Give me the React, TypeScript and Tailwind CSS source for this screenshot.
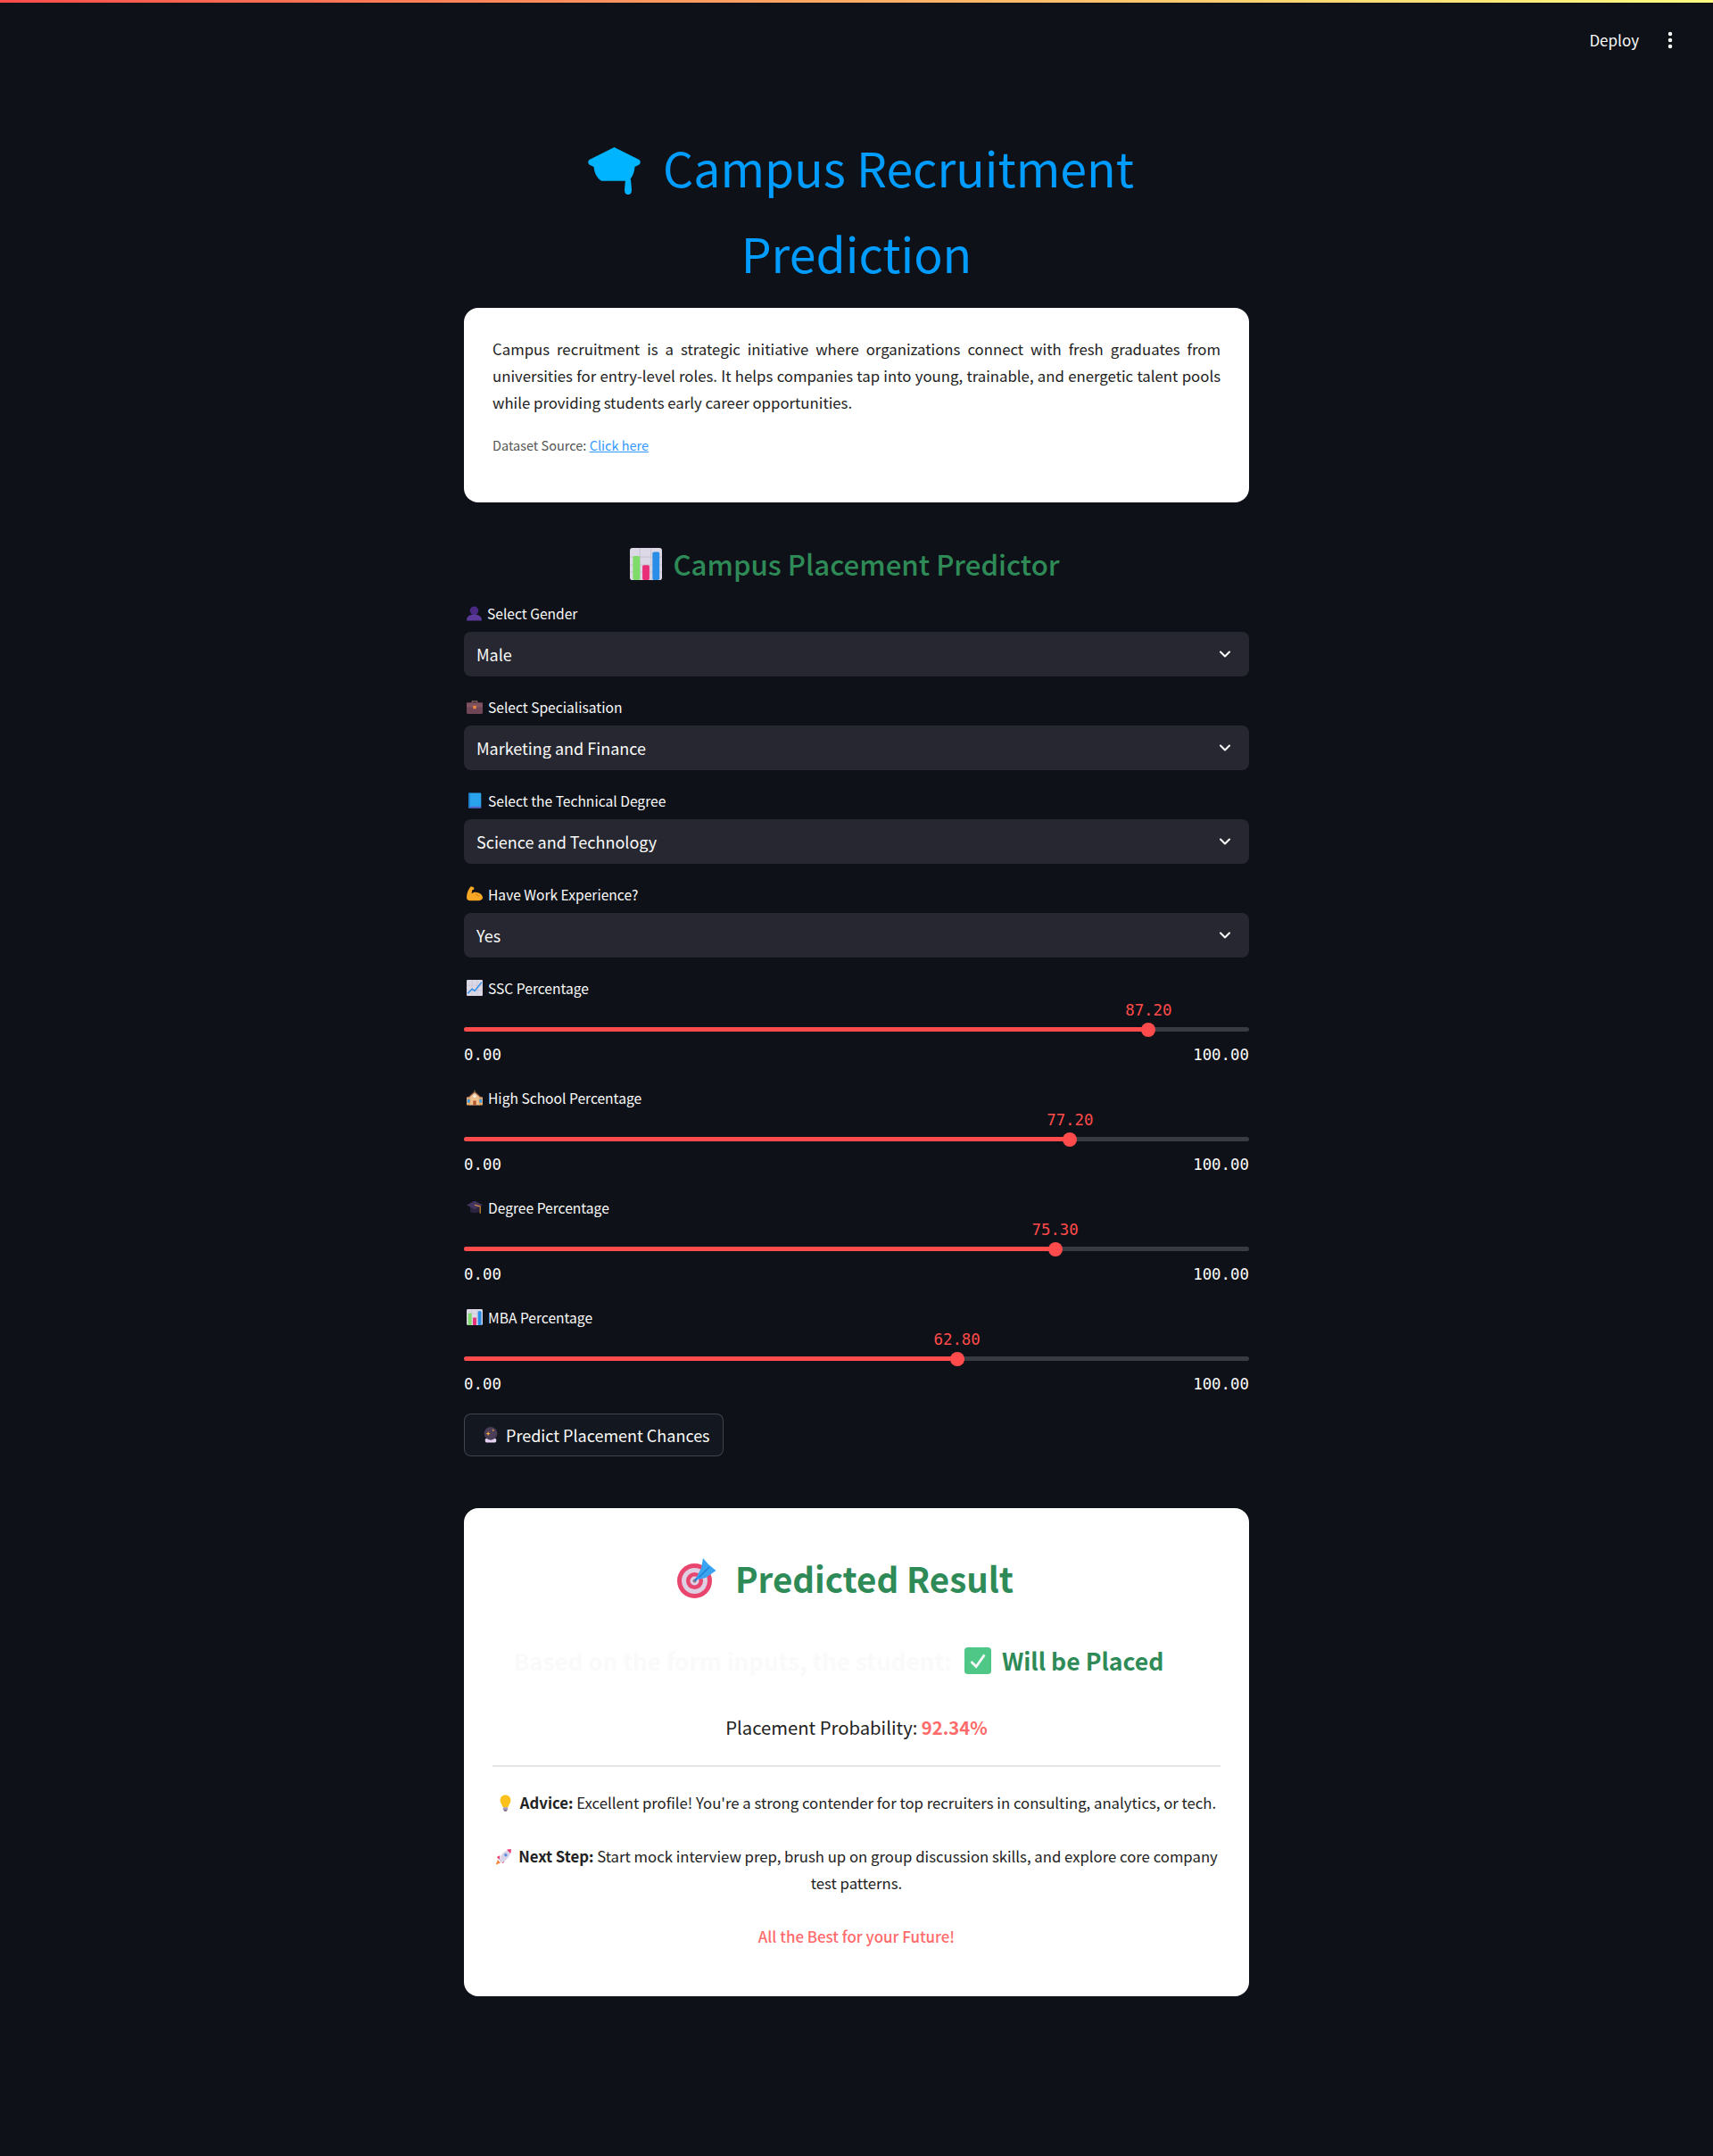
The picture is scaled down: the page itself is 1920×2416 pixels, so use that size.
import { ChevronDown, EllipsisVertical } from "lucide-react";
import type { ReactNode } from "react";

const Bust = ({ className = "" }: { className?: string }) => (
  <svg viewBox="0 0 32 32" className={className}>
    <circle cx="16" cy="10" r="9" fill="#4b2a86" />
    <path d="M0 31c0-9 7-13 16-13s16 4 16 13z" fill="#5b3a9c" />
  </svg>
);

const Briefcase = ({ className = "" }: { className?: string }) => (
  <svg viewBox="0 0 32 32" className={className}>
    <path d="M11 8V5h10v3" fill="none" stroke="#8a6a6a" strokeWidth="2" />
    <rect x="0" y="8" width="32" height="22" rx="2" fill="#6e4656" />
    <rect x="0" y="8" width="32" height="9" fill="#80525f" />
    <rect x="13" y="14" width="6" height="6" fill="#f08a3c" />
  </svg>
);

const BlueBook = ({ className = "" }: { className?: string }) => (
  <svg viewBox="0 0 32 32" className={className}>
    <rect x="4" y="1" width="25" height="30" rx="2" fill="#29a3ec" />
    <rect x="4" y="28" width="25" height="3" fill="#5d5fd0" />
    <rect x="4" y="1" width="3" height="30" fill="#1c7fd0" />
  </svg>
);

const Muscle = ({ className = "" }: { className?: string }) => (
  <svg viewBox="0 0 32 32" className={className}>
    <path d="M8 1c4-1 7 1 7 4 0 2-2 3-4 3l-1 7c3-3 8-4 12-2 5 1 10 5 10 10 0 4-5 6-12 6H7c-4 0-7-3-7-6C0 15 3 7 8 1z" fill="#f9a825" />
    <path d="M17 16c3 0 6 2 7 5" fill="none" stroke="#e07f12" strokeWidth="2" />
  </svg>
);

const ChartUp = ({ className = "" }: { className?: string }) => (
  <svg viewBox="0 0 32 32" className={className}>
    <rect x="0" y="0" width="32" height="32" rx="2" fill="#dcd8e6" />
    <path d="M0 11h32M0 21h32M11 0v32M21 0v32" stroke="#c4bfd2" strokeWidth="1" />
    <path d="M2 27l9-9 5 4 14-17" fill="none" stroke="#2f8fe8" strokeWidth="2.6" />
  </svg>
);

const BarChart = ({ className = "" }: { className?: string }) => (
  <svg viewBox="0 0 32 32" className={className}>
    <rect x="0" y="0" width="32" height="32" rx="2.5" fill="#dcd8e6" />
    <path d="M0 9h32M0 17h32M0 24h32M10 0v32M21 0v32" stroke="#c4bfd2" strokeWidth="0.8" />
    <rect x="3" y="8" width="7" height="24" rx="1.5" fill="#7fdc6a" />
    <rect x="12.5" y="17" width="7" height="15" rx="1.5" fill="#e92f78" />
    <rect x="22.5" y="4" width="7" height="28" rx="1.5" fill="#2a8ee8" />
  </svg>
);

const School = ({ className = "" }: { className?: string }) => (
  <svg viewBox="0 0 32 32" className={className}>
    <path d="M16 1v5" stroke="#4caf50" strokeWidth="1.5" />
    <path d="M6 14l10-9 10 9v17H6z" fill="#eec08f" />
    <path d="M4 15L16 4l12 11" fill="none" stroke="#7a4a3c" strokeWidth="2" />
    <rect x="0" y="15" width="8" height="16" fill="#e8a96e" />
    <rect x="24" y="15" width="8" height="16" fill="#e8a96e" />
    <rect x="1.5" y="19" width="5" height="7" fill="#3a9be0" />
    <rect x="25.5" y="19" width="5" height="7" fill="#3a9be0" />
    <rect x="13" y="22" width="6" height="9" fill="#b5562e" />
    <circle cx="16" cy="13" r="3" fill="#f5f0ea" />
  </svg>
);

const GradCap = ({ className = "" }: { className?: string }) => (
  <svg viewBox="0 0 32 32" className={className}>
    <path d="M7 14v10c3 4 15 4 18 0V14z" fill="#2c2440" />
    <path d="M0 11L16 3l16 8-16 9z" fill="#43355f" />
    <path d="M16 11l11 3v14" fill="none" stroke="#e89b3c" strokeWidth="2" />
  </svg>
);

const CrystalBall = ({ className = "" }: { className?: string }) => (
  <svg viewBox="0 0 32 32" className={className}>
    <rect x="5" y="23" width="22" height="8" rx="2.5" fill="#e3d0f0" />
    <circle cx="16" cy="13" r="13" fill="#4a3d58" />
    <path d="M11 9l1.3 3.2L15.5 13.5l-3.2 1.3L11 18l-1.3-3.2L6.5 13.5l3.2-1.3z" fill="#f4a63c" />
    <path d="M21 4l.8 2 2 .8-2 .8-.8 2-.8-2-2-.8 2-.8z" fill="#f4a63c" />
  </svg>
);

const Target = ({ className = "" }: { className?: string }) => (
  <svg viewBox="0 0 45 45" className={className}>
    <circle cx="19.5" cy="25.5" r="19.5" fill="#e8466f" />
    <circle cx="19.5" cy="25.5" r="14.5" fill="#dfcfe2" />
    <circle cx="19.5" cy="25.5" r="9.5" fill="#e8466f" />
    <circle cx="19.5" cy="25.5" r="5" fill="#dfcfe2" />
    <circle cx="19.5" cy="25.5" r="2" fill="#85798c" />
    <path d="M20 25L31 14" stroke="#2a86dc" strokeWidth="2.5" />
    <path d="M29 0L35 7 43.500 14 32 22 24 24 22 21 27 11z" fill="#3aa4f0" />
    <path d="M24 22L36 10" stroke="#1f7fd6" strokeWidth="1.5" />
  </svg>
);

const CheckBox = ({ className = "" }: { className?: string }) => (
  <svg viewBox="0 0 32 32" className={className}>
    <rect x="0" y="0" width="32" height="32" rx="4" fill="#4fc787" />
    <path d="M8 17l6 6 10-14" fill="none" stroke="#f4f8f5" strokeWidth="3" />
  </svg>
);

const Bulb = ({ className = "" }: { className?: string }) => (
  <svg viewBox="0 0 32 32" className={className}>
    <path d="M16 1c6 0 10 4 10 10 0 5-4 8-5 13H11c-1-5-5-8-5-13C6 5 10 1 16 1z" fill="#fcc21b" />
    <rect x="11.5" y="24" width="9" height="6" rx="1.5" fill="#a79cb8" />
    <rect x="13.5" y="29" width="5" height="2.5" fill="#6d6080" />
  </svg>
);

const Rocket = ({ className = "" }: { className?: string }) => (
  <svg viewBox="0 0 32 32" className={className}>
    <path d="M5 22l-4 9 9-3z" fill="#f4853c" />
    <path d="M3 17l6-3-1 8zM15 29l3-6-8 1z" fill="#e8396f" />
    <path d="M8 24C8 14 17 4 30 2c0 13-10 22-18 26z" fill="#d8d3e6" />
    <path d="M22 3c3-1 6-1 8-1 0 2 0 5-1 8z" fill="#e8396f" />
    <circle cx="20" cy="13" r="3" fill="#5a8fe0" />
  </svg>
);

function Select({ icon, label, value }: { icon: ReactNode; label: string; value: string }) {
  return (
    <div className="mb-[23px]">
      <div className="mb-2 flex h-6 items-center gap-[6px] pb-[2px] pl-[3px] text-[15.6px] leading-6 text-[#fafafa]">
        {icon}
        <span>{label}</span>
      </div>
      <div className="flex h-[50px] items-center justify-between rounded-lg bg-[#262730] pl-[14px] pr-[17px] text-lg text-[#fafafa]">
        <span>{value}</span>
        <ChevronDown className="h-[20px] w-[20px]" strokeWidth={2.5} />
      </div>
    </div>
  );
}

function Slider({ icon, label, value }: { icon: ReactNode; label: string; value: number }) {
  return (
    <div className="mb-[25px]">
      <div className="flex h-6 items-center gap-[6px] pb-[2px] pl-[3px] text-[15.6px] leading-6 text-[#fafafa]">
        {icon}
        <span>{label}</span>
      </div>
      <div className="relative mt-[31px] h-[5px] rounded-full bg-[#383b42]">
        <div className="h-full rounded-full bg-[#ff4b4b]" style={{ width: `${value}%` }} />
        <div
          className="absolute top-1/2 h-4 w-4 -translate-x-1/2 -translate-y-1/2 rounded-full bg-[#ff4b4b]"
          style={{ left: `${value}%` }}
        />
        <div
          className="absolute bottom-[12px] -translate-x-1/2 font-['DejaVu_Sans_Mono',monospace] text-[17.4px] leading-6 text-[#ff4b4b]"
          style={{ left: `${value}%` }}
        >
          {value.toFixed(2)}
        </div>
      </div>
      <div className="mt-[14px] flex h-6 justify-between font-['DejaVu_Sans_Mono',monospace] text-[17.4px] leading-6 text-[#fafafa]">
        <span>0.00</span>
        <span>100.00</span>
      </div>
    </div>
  );
}

export default function App() {
  return (
    <div className="min-h-[2416px] bg-[#0e1117] font-['Noto_Sans_CJK_SC',sans-serif] text-[#fafafa]">
      <div className="h-[3px] bg-gradient-to-r from-[#ff4b4b] to-[#fffd80]" />
      <div className="flex h-[136px] items-start justify-end pr-[36px] pt-[30px]">
        <span className="text-[17px] leading-6">Deploy</span>
        <EllipsisVertical className="ml-[23px] h-6 w-6" strokeWidth={2.5} />
      </div>

      <main className="mx-auto w-[880px]">
        <h1 className="text-center text-[53.6px] font-normal leading-[96px] text-[#009cff]">
          <svg viewBox="0 0 60 54" className="ml-[10px] mr-[24px] inline-block h-[54px] w-[60px] align-[-9px]">
            <path d="M29.5 0L57.5 14Q60 16.7 57.5 19.5L52.5 22Q52 31 46 37.7H15Q7.5 33 6.5 22L1.5 19.5Q-1 16.7 1.5 14Z" fill="#00b4ff" />
            <path d="M42 36H48L49 48Q49 53 45 53Q41 53 41 48Z" fill="#00b4ff" />
          </svg>
          Campus Recruitment Prediction
        </h1>

        <section className="mt-[14px] h-[218px] rounded-2xl bg-white px-8 pt-[31px] text-[#222]">
          <p className="text-justify text-[16.77px] leading-[30px]">
            Campus recruitment is a strategic initiative where organizations connect with fresh graduates from
            universities for entry-level roles. It helps companies tap into young, trainable, and energetic talent pools
            while providing students early career opportunities.
          </p>
          <p className="mt-[21px] text-[14.5px] leading-6 text-[#555]">
            Dataset Source: <a className="text-[#3399ff] underline">Click here</a>
          </p>
        </section>

        <h2 className="mt-[45px] mb-5 flex h-12 items-center justify-center gap-[12px] pr-[26px] text-[31.2px] font-medium leading-[48px] text-[#2e8b57]">
          <BarChart className="h-[36px] w-[36px]" />
          Campus Placement Predictor
        </h2>

        <Select icon={<Bust className="h-[17px] w-[17px]" />} label="Select Gender" value="Male" />
        <Select icon={<Briefcase className="h-[18px] w-[18px]" />} label="Select Specialisation" value="Marketing and Finance" />
        <Select icon={<BlueBook className="h-[18px] w-[18px]" />} label="Select the Technical Degree" value="Science and Technology" />
        <Select icon={<Muscle className="h-[18px] w-[18px]" />} label="Have Work Experience?" value="Yes" />

        <Slider icon={<ChartUp className="h-[18px] w-[18px]" />} label="SSC Percentage" value={87.2} />
        <Slider icon={<School className="h-[18px] w-[18px]" />} label="High School Percentage" value={77.2} />
        <Slider icon={<GradCap className="h-[18px] w-[18px]" />} label="Degree Percentage" value={75.3} />
        <Slider icon={<BarChart className="h-[18px] w-[18px]" />} label="MBA Percentage" value={62.8} />

        <button className="-mt-[4px] flex h-12 w-[291px] items-center gap-[8px] rounded-lg border border-[#fafafa33] bg-[#13171f] pl-5 text-lg">
          <CrystalBall className="h-[18px] w-[18px]" />
          Predict Placement Chances
        </button>

        <section className="mt-[58px] h-[547px] rounded-2xl bg-white px-8 pt-[48px] text-center text-[#222]">
          <h2 className="flex h-[60px] items-center justify-center gap-[20px] pr-[25px] text-[38.5px] font-semibold leading-[60px] text-[#2e8b57]">
            <Target className="h-[45px] w-[45px]" />
            Predicted Result
          </h2>
          <div className="mt-[43px] flex h-10 items-center justify-center pr-[40px] text-[26px] font-semibold leading-10">
            <span className="text-[#fafafa]">Based on the form inputs, the student:</span>
            <CheckBox className="ml-[14px] mr-[12px] h-[30px] w-[30px]" />
            <span className="text-[26.6px] font-bold text-[#2e8b57]">Will be Placed</span>
          </div>
          <p className="mt-[39px] text-[20.26px] leading-[30px]">
            Placement Probability: <b className="font-semibold text-[#ff6b6b]">92.34%</b>
          </p>
          <div className="mt-[28px] h-[2px] bg-[#e5e5e5]" />
          <p className="mt-[25px] text-[16.73px] leading-[30px]">
            <Bulb className="mr-[7px] inline-block h-[19px] w-[19px] align-[-3px]" />
            <b className="font-semibold">Advice:</b> Excellent profile! You're a strong contender for top recruiters in
            consulting, analytics, or tech.
          </p>
          <p className="mt-[30px] text-[16.73px] leading-[30px]">
            <Rocket className="mr-[7px] inline-block h-[19px] w-[19px] align-[-3px]" />
            <b className="font-semibold">Next Step:</b> Start mock interview prep, brush up on group discussion skills, and
            explore core company test patterns.
          </p>
          <p className="mt-[30px] text-[16.9px] font-medium leading-[30px] text-[#ff6b6b]">All the Best for your Future!</p>
        </section>
      </main>
    </div>
  );
}
